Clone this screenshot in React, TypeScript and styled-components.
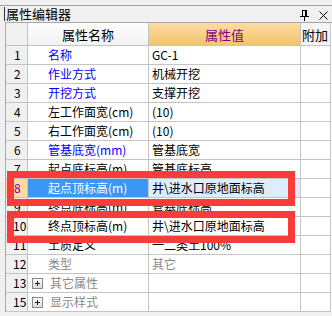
import React from 'react';
import styled, { createGlobalStyle } from 'styled-components';

const GlobalStyle = createGlobalStyle`
  html, body {
    margin: 0;
    padding: 0;
    background: #f0f0f0;
  }
  body {
    font-family: "Noto Sans CJK SC", "DejaVu Sans", sans-serif;
    font-size: 12px;
  }
`;

const Panel = styled.div`
  width: 332px;
  height: 316px;
  display: flex;
  flex-direction: column;
  background: #f0f0f0;
  overflow: hidden;
`;

const TitleBar = styled.div`
  margin-top: 5px;
  height: 16px;
  border-top: 1px solid #a0a0a0;
  display: flex;
  align-items: center;
  padding-right: 4px;
`;

const TitleText = styled.div`
  margin-left: 4px;
  padding-left: 1px;
  border-left: 1px solid #303030;
  font-size: 13px;
  line-height: 14px;
  color: #000;
  flex: 1;
`;

const TitleButtons = styled.div`
  display: flex;
  gap: 10px;
  align-items: center;
  padding-top: 2px;
`;

const Table = styled.div`
  position: relative;
  margin-top: 0px;
  margin-left: 5px;
  width: 326px;
  display: grid;
  grid-template-columns: 22px 121px 152px 30px;
  grid-auto-rows: 19px;
  grid-template-rows: 23px;
  border-left: 1px solid #a8a8a8;
  border-top: 1px solid #a8a8a8;
  background: #fff;
`;

const Cell = styled.div<{ $bg?: string; $color?: string; $align?: string; $pad?: number }>`
  box-sizing: border-box;
  border-right: 1px solid #c4c4c4;
  border-bottom: 1px solid #c4c4c4;
  background: ${p => p.$bg || '#fff'};
  color: ${p => p.$color || '#000'};
  display: flex;
  align-items: center;
  justify-content: ${p => p.$align || 'flex-start'};
  padding-left: ${p => p.$pad ?? 0}px;
  white-space: nowrap;
  overflow: hidden;
  line-height: 18px;
`;

const HeaderCell = styled(Cell)`
  font-size: 13px;
  padding-top: 1px;
`;

const ValueHeader = styled(HeaderCell)`
  background: linear-gradient(#fcdca2, #f3c46c);
  color: #800080;
`;

const NumCell = styled(Cell)`
  background: ${p => p.$bg || '#f0f0f0'};
  padding-left: 8px;
`;

const PlusBox = styled.span`
  width: 9px;
  height: 9px;
  margin: 0 7px 0 4px;
  border: 1px solid #8a8a8a;
  background: linear-gradient(#fafafa, #dcdcdc);
  position: relative;
  flex: none;
  &::before {
    content: '';
    position: absolute;
    left: 2px;
    top: 4px;
    width: 5px;
    height: 1px;
    background: #202020;
  }
  &::after {
    content: '';
    position: absolute;
    left: 4px;
    top: 2px;
    width: 1px;
    height: 5px;
    background: #202020;
  }
`;

const Mark = styled.div<{ $top: number; $height: number }>`
  position: absolute;
  left: 1px;
  top: ${p => p.$top}px;
  width: 288px;
  height: ${p => p.$height}px;
  box-sizing: border-box;
  border: 7px solid #f83c3c;
  pointer-events: none;
`;

type Row = {
  no: string;
  name: string;
  value: string;
  tone: 'blue' | 'black' | 'gray';
  group?: boolean;
  selected?: boolean;
};

const rows: Row[] = [
  { no: '1', name: '名称', value: 'GC-1', tone: 'blue' },
  { no: '2', name: '作业方式', value: '机械开挖', tone: 'blue' },
  { no: '3', name: '开挖方式', value: '支撑开挖', tone: 'blue' },
  { no: '4', name: '左工作面宽(cm)', value: '(10)', tone: 'black' },
  { no: '5', name: '右工作面宽(cm)', value: '(10)', tone: 'black' },
  { no: '6', name: '管基底宽(mm)', value: '管基底宽', tone: 'blue' },
  { no: '7', name: '起点底标高(m)', value: '管基底标高', tone: 'black' },
  { no: '8', name: '起点顶标高(m)', value: '井\\进水口原地面标高', tone: 'black', selected: true },
  { no: '9', name: '终点底标高(m)', value: '管基底标高', tone: 'black' },
  { no: '10', name: '终点顶标高(m)', value: '井\\进水口原地面标高', tone: 'black' },
  { no: '11', name: '土质定义', value: '一二类土100%', tone: 'black' },
  { no: '12', name: '类型', value: '其它', tone: 'gray' },
  { no: '13', name: '其它属性', value: '', tone: 'gray', group: true },
  { no: '15', name: '显示样式', value: '', tone: 'gray', group: true },
];

const toneColor = { blue: '#0000ff', black: '#000', gray: '#8a8a8a' };

const PinIcon = () => (
  <svg width="9" height="11" viewBox="0 0 9 11">
    <rect x="2.5" y="0.5" width="4" height="6" fill="none" stroke="#000" />
    <rect x="5" y="1" width="1.5" height="5.5" fill="#000" />
    <line x1="0" y1="6.5" x2="9" y2="6.5" stroke="#000" />
    <line x1="4.5" y1="7" x2="4.5" y2="11" stroke="#000" />
  </svg>
);

const CloseIcon = () => (
  <svg width="9" height="9" viewBox="0 0 9 9">
    <path d="M0.5 0.5 L8.5 8.5 M8.5 0.5 L0.5 8.5" stroke="#000" strokeWidth="1" />
  </svg>
);

const App = () => {
  return (
    <Panel>
      <GlobalStyle />
      <TitleBar>
        <TitleText>属性编辑器</TitleText>
        <TitleButtons>
          <PinIcon />
          <CloseIcon />
        </TitleButtons>
      </TitleBar>
      <Table style={{ marginTop: 0 }}>
        <HeaderCell $bg="#f0f0f0" />
        <HeaderCell $bg="linear-gradient(#fdfdfd, #f2f2f2)" $align="center">属性名称</HeaderCell>
        <ValueHeader $align="center">属性值</ValueHeader>
        <HeaderCell $bg="#f4f4f4" $pad={1}>附加</HeaderCell>
        {rows.map(r => (
          <React.Fragment key={r.no}>
            <NumCell
              $bg={r.selected ? '#fed9a0' : undefined}
              $color={r.selected ? '#800080' : '#000'}
              $pad={8}
              style={r.no.length > 1 ? { paddingLeft: 7 } : undefined}
            >
              {r.no}
            </NumCell>
            <Cell
              $bg={r.selected ? '#3b97f6' : '#fff'}
              $color={r.selected ? '#fff' : toneColor[r.tone]}
              $pad={r.group ? 0 : 20}
            >
              {r.group && <PlusBox />}
              {r.name}
            </Cell>
            <Cell
              $bg={r.selected ? '#ddedfd' : '#fff'}
              $color={r.tone === 'gray' ? '#8a8a8a' : '#000'}
              $pad={3}
            >
              {r.value}
            </Cell>
            <Cell />
          </React.Fragment>
        ))}
        <Mark $top={148} $height={35} />
        <Mark $top={188} $height={32} />
      </Table>
    </Panel>
  );
};

export default App;
